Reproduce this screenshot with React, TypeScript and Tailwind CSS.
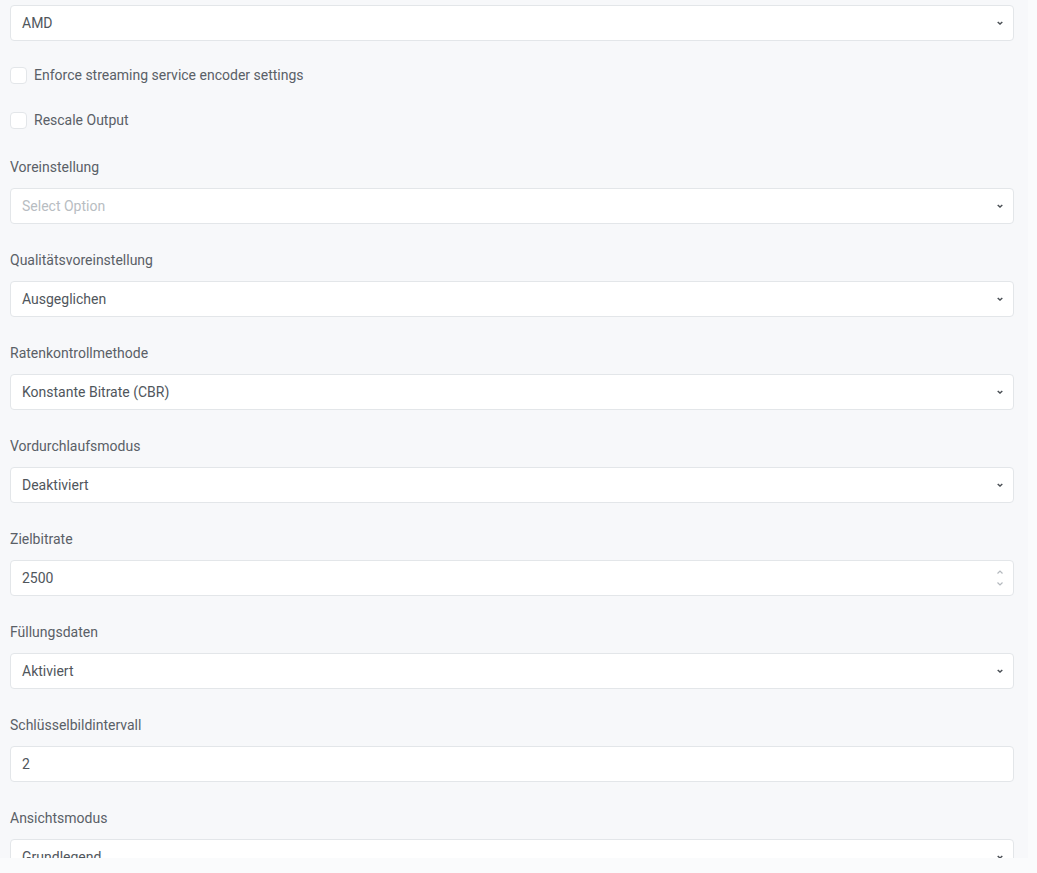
import type { ReactNode } from "react";

function Chevron() {
  return (
    <svg
      className="absolute right-[8px] top-1/2 -translate-y-1/2 w-[10px] h-[10px] text-[#4a4f55]"
      viewBox="0 0 10 10"
      fill="none"
      stroke="currentColor"
      strokeWidth="1.4"
    >
      <path d="M2.7 3.9 5 6.1 7.3 3.9" />
    </svg>
  );
}

function Spinner() {
  return (
    <div className="absolute right-[8px] top-1/2 -translate-y-1/2 flex flex-col gap-[4px] text-[#b4b9be]">
      <svg className="w-[10px] h-[8px]" viewBox="0 0 10 8" fill="none" stroke="currentColor" strokeWidth="1.2">
        <path d="M2.5 5.5 5 3 7.5 5.5" />
      </svg>
      <svg className="w-[10px] h-[8px]" viewBox="0 0 10 8" fill="none" stroke="currentColor" strokeWidth="1.2">
        <path d="M2.5 2.5 5 5 7.5 2.5" />
      </svg>
    </div>
  );
}

function Box({ children, kind = "select" }: { children: ReactNode; kind?: "select" | "number" | "text" }) {
  return (
    <div className="relative h-[36px] bg-white border border-[#e3e6e9] rounded-[4px] flex items-center pl-[11px] pr-[30px] text-[14px] text-[#50565c]">
      {children}
      {kind === "select" && <Chevron />}
      {kind === "number" && <Spinner />}
    </div>
  );
}

function Field({ label, children }: { label: string; children: ReactNode }) {
  return (
    <div className="mb-[26px]">
      <div className="h-[20px] leading-[20px] text-[14px] text-[#5a6067] mb-[11px]">{label}</div>
      {children}
    </div>
  );
}

function Check({ label }: { label: string }) {
  return (
    <div className="flex items-center h-[20px] gap-[7px]">
      <span className="w-[17px] h-[17px] bg-white border border-[#e3e6e9] rounded-[4px]" />
      <span className="text-[14px] text-[#5a6067]">{label}</span>
    </div>
  );
}

export default function App() {
  return (
    <div className="w-[1037px] h-[873px] bg-[#fafbfc] overflow-hidden" style={{ fontFamily: "Roboto, 'Liberation Sans', sans-serif" }}>
      <div className="w-[1028px] h-[858px] bg-[#f7f8fa] overflow-hidden pl-[10px] pr-[14px] pt-[5px]">
        <Box>AMD</Box>
        <div className="mt-[24px] flex flex-col gap-[25px]">
          <Check label="Enforce streaming service encoder settings" />
          <Check label="Rescale Output" />
        </div>
        <div className="mt-[27px]">
          <Field label="Voreinstellung">
            <Box>
              <span className="text-[#b8bdc2]">Select Option</span>
            </Box>
          </Field>
          <Field label="Qualitätsvoreinstellung">
            <Box>Ausgeglichen</Box>
          </Field>
          <Field label="Ratenkontrollmethode">
            <Box>Konstante Bitrate (CBR)</Box>
          </Field>
          <Field label="Vordurchlaufsmodus">
            <Box>Deaktiviert</Box>
          </Field>
          <Field label="Zielbitrate">
            <Box kind="number">2500</Box>
          </Field>
          <Field label="Füllungsdaten">
            <Box>Aktiviert</Box>
          </Field>
          <Field label="Schlüsselbildintervall">
            <Box kind="text">2</Box>
          </Field>
          <Field label="Ansichtsmodus">
            <Box>Grundlegend</Box>
          </Field>
        </div>
      </div>
    </div>
  );
}
